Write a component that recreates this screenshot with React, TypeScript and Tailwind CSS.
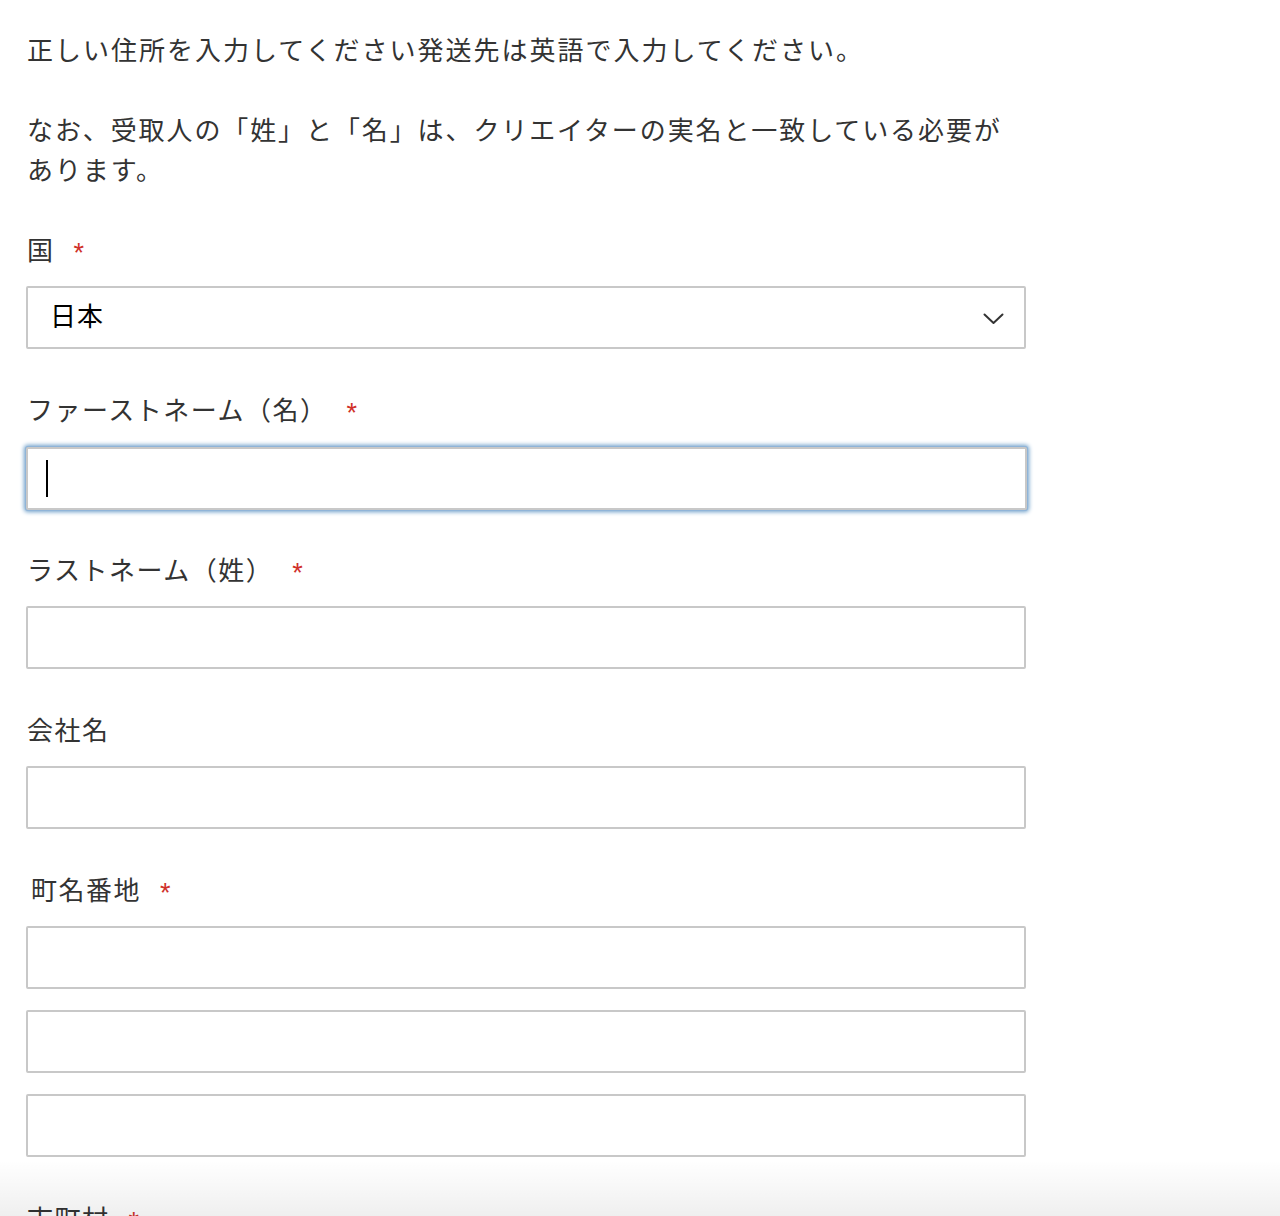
const font = { fontFamily: '"Noto Sans CJK JP", "Noto Sans", sans-serif' };

function Label({ text, required, className = '' }: { text: string; required?: boolean; className?: string }) {
  return (
    <div className={`flex h-[40px] items-center text-[26px] tracking-[1.5px] text-[#333] ${className}`}>
      <span>{text}</span>
      {required && (
        <span
          className="ml-[19px] inline-flex h-[40px] items-center pt-[10px] text-[27px] leading-none text-[#d0302a]"
          style={{ fontFamily: '"Liberation Sans", Arial, sans-serif' }}
        >
          *
        </span>
      )}
    </div>
  );
}

function TextBox() {
  return (
    <input
      type="text"
      className="block h-[63px] w-[1000px] rounded-[2px] border-2 border-[#c8c8c8] bg-white px-[20px] text-[26px] outline-none"
    />
  );
}

export default function App() {
  return (
    <div className="relative min-h-[1216px] bg-white pl-[26px] pt-[29px]" style={font}>
      {/* 案内文 */}
      <div className="pl-px text-[26px] leading-[40px] text-[#333]">
        <p className="tracking-[2px]">正しい住所を入力してください発送先は英語で入力してください。</p>
        <p className="mt-[40px] whitespace-nowrap tracking-[1.9px]">
          なお、受取人の「姓」と「名」は、クリエイターの実名と一致している必要が
          <br />
          あります。
        </p>
      </div>

      {/* 国 */}
      <Label text="国" required className="mt-[39px] pl-px" />
      <div className="mt-[18px] flex h-[63px] w-[1000px] items-center justify-between rounded-[2px] border-2 border-[#c8c8c8] bg-white pl-[22px] pr-[20px]">
        <span className="pb-[6px] text-[26px] tracking-[1px] text-black">日本</span>
        <svg width="21" height="12" viewBox="0 0 21 12" className="mt-[2px]" fill="none">
          <polyline points="1.5,1.5 10.5,10 19.5,1.5" stroke="#333" strokeWidth="2" strokeLinecap="round" strokeLinejoin="round" />
        </svg>
      </div>

      {/* ファーストネーム */}
      <Label text="ファーストネーム（名）" required className="mt-[39px] pl-px" />
      <div className="mt-[19px] flex h-[63px] w-[1001px] items-center rounded-[2px] border-2 border-[#c8c8c8] bg-white pl-[18px] shadow-[0_0_0_1px_#8fb4d8,0_0_4px_2px_#6d9fc9]">
        <span className="h-[37px] w-[2px] bg-black" />
      </div>

      {/* ラストネーム */}
      <Label text="ラストネーム（姓）" required className="mt-[38px] pl-px" />
      <div className="mt-[18px]">
        <TextBox />
      </div>

      {/* 会社名 */}
      <Label text="会社名" className="mt-[39px] pl-px" />
      <div className="mt-[18px]">
        <TextBox />
      </div>

      {/* 町名番地 */}
      <Label text="町名番地" required className="mt-[39px] pl-[5px]" />
      <div className="mt-[18px] flex flex-col gap-[21px]">
        <TextBox />
        <TextBox />
        <TextBox />
      </div>

      {/* 市町村 */}
      <Label text="市町村" required className="mt-[40px] pl-px" />

      <div className="pointer-events-none absolute inset-x-0 top-[1160px] h-[56px] bg-gradient-to-b from-[#ffffff00] to-[#00000010]" />
    </div>
  );
}
